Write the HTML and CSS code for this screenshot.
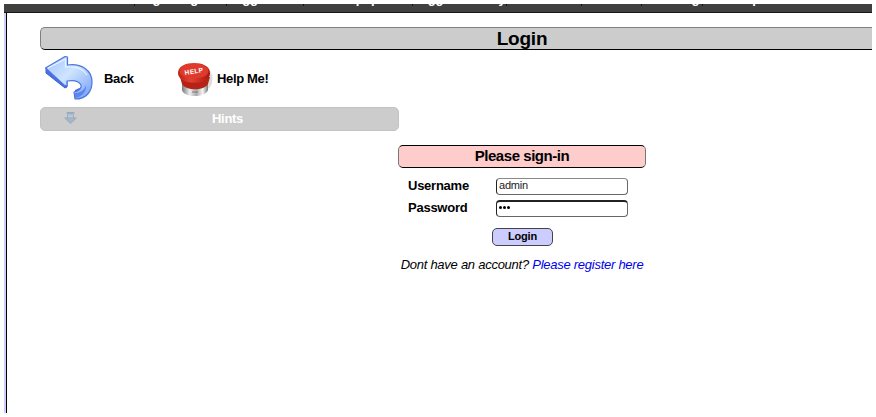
FILE: index.html
```
<!DOCTYPE html>
<html lang="en">
<head>
<meta charset="utf-8">
<title>Login</title>
<link rel="stylesheet" href="styles.css">
</head>
<body>
<div class="frame">
  <nav class="menu">
    <span>Home</span><span>Login/Register</span><span>Toggle Hints</span><span>Show Popup Hints</span><span>Toggle Security</span><span>Enforce SSL</span><span>Reset DB</span><span>View Log</span><span>View Captured Data</span>
  </nav>
  <main class="content">
    <h1 class="page-title">Login</h1>
    <div class="actions">
      <a class="back">
        <svg width="50" height="46" viewBox="0 0 50 46">
          <defs>
            <linearGradient id="blue" x1="0" y1="0" x2="1" y2="1"><stop offset="0" stop-color="#9fc0ff"/><stop offset=".45" stop-color="#cfe5ff"/><stop offset="1" stop-color="#6f9cf5"/></linearGradient>
          </defs>
          <path d="M2 13V18L21 33 23 32V26Z" fill="#4a70e0" stroke="#3c60d0"/>
          <path d="M31 35 40 31 42 38 36 43 31 42Z" fill="#4569df"/>
          <path d="M1.500 13 21 1.500 23.500 2V10C37 8 48 15 48 27C48 37 42 44 31 44L30 37C35 36 38 33 37 30C35 26 29 25 23 26V31L20 30Z" fill="url(#blue)" stroke="#4c75df" stroke-width="1.200" stroke-linejoin="round"/>
          <path d="M31 38C36 38 41 35 42 30C43 36 38 42 31 43Z" fill="#5c86ee"/>
          <path d="M4 13 21.500 4V12C31 11 39 14 43 20" fill="none" stroke="#e8f4ff" stroke-width="1.200"/>
        </svg>
        <span>Back</span>
      </a>
      <a class="help">
        <svg width="38" height="36" viewBox="0 0 38 36">
          <defs>
            <linearGradient id="metal"><stop offset="0" stop-color="#777"/><stop offset=".3" stop-color="#eee"/><stop offset=".55" stop-color="#aaa"/><stop offset=".8" stop-color="#f5f5f5"/><stop offset="1" stop-color="#777"/></linearGradient>
            <linearGradient id="red" x1="0" x2="1"><stop offset="0" stop-color="#b92317"/><stop offset=".4" stop-color="#e64031"/><stop offset="1" stop-color="#a81810"/></linearGradient>
          </defs>
          <ellipse cx="28" cy="17" rx="7.500" ry="11" fill="#ddd"/>
          <path d="M5 22V28C7 36 28 36 31 28V22Z" fill="url(#metal)"/>
          <path d="M15 30H21" stroke="#777"/>
          <path d="M3 15 5 22C9 29 27 29 31 22L33 15Z" fill="#b52318"/>
          <path d="M1 11C1 4 9 1 17 1S33 4 33 11C34 24 1 24 1 11Z" fill="url(#red)"/>
          <ellipse cx="17" cy="9" rx="14.500" ry="7.500" fill="#df3b2d"/>
          <text class="help-text" x="17" y="11.500" text-anchor="middle" transform="rotate(-10 17 9)">HELP</text>
        </svg>
        <span>Help Me!</span>
      </a>
    </div>
    <div class="hints">
      <svg width="13" height="12" viewBox="0 0 13 12"><path d="M3 .5H10V2H3ZM3.500 3.500H9.500V6H12.300L6.500 11.500.7 6H3.500Z" fill="#a3b6ca" stroke="#91a5ba" stroke-width=".8"/><path d="M4 4H9" stroke="#d4e2ec"/></svg>
      <span>Hints</span>
    </div>
    <form class="login">
      <h2 class="login-title">Please sign-in</h2>
      <div class="row"><label for="user">Username</label><input id="user" type="text" value="admin"></div>
      <div class="row second"><label for="pass">Password</label><div class="password" id="pass"><i></i><i></i><i></i></div></div>
      <button class="submit" type="button">Login</button>
      <p class="register">Dont have an account? <a>Please register here</a></p>
    </form>
  </main>
</div>
</body>
</html>
```
FILE: styles.css
```
* { box-sizing: border-box; }
body { margin: 0; background: #fff; font-family: "Liberation Sans", Arial, sans-serif; color: #000; overflow: hidden; }
.frame { margin: 4px; width: 868px; height: 409px; overflow: hidden; background: #fff; }
.menu { height: 9px; background: #404040; border-bottom: 1px solid #181818; display: grid; grid-template-columns: 41px 92px 77px 109px 94px 75px 60px 61px 120px; padding-left: 90px; overflow: hidden; font-size: 13px; letter-spacing: -.3px; font-weight: bold; line-height: 16px; color: #fff; white-space: nowrap; }
.menu span { height: 16px; margin-top: -13px; border-right: 1px solid #111; display: flex; justify-content: center; clip-path: inset(0 0 1px 0); }
.menu span:last-child { border: 0; }
.content { height: 400px; border-left: 1px solid #000; margin-left: 2px; box-shadow: -2px 0 #ccccff; padding: 14px 0 0 33px; }
.page-title { margin: 0; height: 23px; border: 1px solid #000; border-color: #808080 transparent #000 #808080; border-right: 0; border-radius: 5px 0 0 5px; background: #ccc; text-align: center; font-size: 19px; letter-spacing: -.2px; line-height: 21px; padding-left: 131px; }
.actions { display: flex; height: 57px; font-weight: bold; font-size: 13px; letter-spacing: -.35px; }
.back, .help { display: flex; align-items: center; }
.back { width: 137px; padding-left: 4px; }
.back svg { margin-top: -1px; }
.back span { margin: -1px 0 0 10px; }
.help svg { margin-top: 3px; }
.help span { margin: -1px 0 0 2px; }
.help-text { font: bold 6.5px "Liberation Sans", sans-serif; letter-spacing: .4px; fill: #fff; }
.hints { width: 359px; height: 24px; border-radius: 5px; border: 1px solid #c3c3c3; background: #ccc; color: #fff; display: flex; align-items: center; padding-left: 23px; font-size: 13px; font-weight: bold; letter-spacing: -.3px; }
.hints span { margin: -2px 0 0 135px; }
.hints svg { margin-top: -2px; }
.login { width: 248px; margin: 14px 0 0 358px; }
.login-title { margin: 0 0 9px; height: 23px; border: 1px solid #000; border-left-color: #777; border-right-color: #777; border-radius: 5px; background: #ffcccc; text-align: center; font-size: 15px; letter-spacing: -.45px; line-height: 19px; }
.row { display: flex; align-items: center; height: 18px; padding-left: 10px; font-size: 13px; font-weight: bold; letter-spacing: -.25px; }
.row label { width: 88px; margin-top: -2px; }
.second { margin-top: 4px; }
.row input, .password { width: 132px; height: 17px; border: 1px solid #666; border-top-width: 2px; border-left-color: #222; border-radius: 4px; background: #fff; padding: 0 2px; font: 11px "Liberation Sans", sans-serif; color: #222; }
.row input { border-top: 1px solid #888; padding-bottom: 3px; letter-spacing: -.2px; }
.password { border-top-color: #222; display: flex; align-items: center; gap: 1px; padding-bottom: 2px; }
.password i { width: 3px; height: 3px; border-radius: 50%; background: #000; }
.submit { display: block; width: 61px; height: 18px; margin: 11px 0 0 94px; border: 1px solid #444; border-radius: 5px; background: #ccccff; padding: 0 0 3px; font: bold 11px "Liberation Sans", sans-serif; letter-spacing: -.2px; color: #000; }
.register { margin: 11px 0 0; text-align: center; font-size: 13px; letter-spacing: -.26px; line-height: 15px; font-style: italic; white-space: nowrap; }
.register a { color: #0000ee; }
```
